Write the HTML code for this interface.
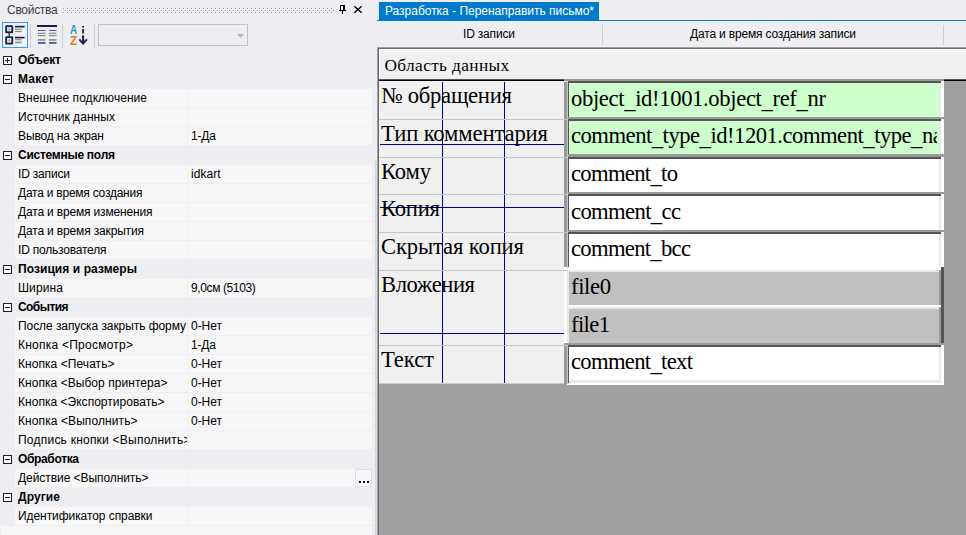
<!DOCTYPE html>
<html lang="ru">
<head>
<meta charset="utf-8">
<title>Свойства</title>
<style>
html,body{margin:0;padding:0}
body{width:966px;height:535px;position:relative;overflow:hidden;background:#EEEEF2;font-family:"Liberation Sans",sans-serif}
#root{position:absolute;left:0;top:0;width:966px;height:535px;overflow:hidden}
#root div,#root svg{position:absolute}
.t{white-space:nowrap}
.u{position:relative;top:2px}
</style>
</head>
<body>
<div id="root">
<div id="properties-panel">
<!-- left panel chrome: grip -->
<svg style="left:63px;top:8px" width="272" height="5" viewBox="0 0 272 5">
<defs><pattern id="gp" x="0" y="0" width="4" height="4" patternUnits="userSpaceOnUse"><rect x="0" y="0" width="1" height="1" fill="#999"/><rect x="2" y="2" width="1" height="1" fill="#999"/></pattern></defs>
<rect x="0" y="0" width="271" height="5" fill="url(#gp)"/>
</svg>
<!-- pin -->
<svg style="left:338px;top:4px" width="9" height="11" viewBox="0 0 9 11">
<path d="M2.5 6V1.5H6V6" fill="none" stroke="#000" stroke-width="1"/><rect x="5" y="1" width="2" height="5" fill="#000"/><rect x="1" y="6" width="7" height="1" fill="#000"/><rect x="4" y="7" width="1" height="3" fill="#000"/>
</svg>
<!-- close -->
<svg style="left:353px;top:5px" width="10" height="9" viewBox="0 0 10 9">
<path d="M1.3 1.3L8.7 7.7M8.7 1.3L1.3 7.7" fill="none" stroke="#000" stroke-width="1.4"/>
</svg>
<!-- toolbar -->
<div style="left:2px;top:22px;width:24px;height:24px;border:1px solid #3399FF;background:#F3F3F5"></div>
<svg style="left:2px;top:22px" width="92" height="26" viewBox="2 22 92 26">
<!-- icon 1 -->
<rect x="5.2" y="25.2" width="8" height="8" rx="1.3" fill="#1B1F45"/>
<rect x="7.1" y="27.1" width="4.2" height="4.2" fill="#fff"/>
<rect x="5.2" y="36.2" width="8" height="8.3" rx="1.3" fill="#1B1F45"/>
<rect x="7.1" y="38.1" width="4.2" height="4.5" fill="#fff"/>
<rect x="8.6" y="33" width="1.2" height="3.5" fill="#1B1F45"/>
<path d="M7.6 29.2H10.8M9.2 27.6V30.8" stroke="#3A9FB0" stroke-width="0.8" fill="none"/><path d="M7.6 40.3H10.8M9.2 38.7V41.9" stroke="#55AE78" stroke-width="0.8" fill="none"/>
<rect x="15" y="25.8" width="9.6" height="1.7" fill="#1B1F45"/>
<rect x="15" y="28.8" width="6.6" height="1.1" fill="#76888A"/>
<rect x="15" y="31" width="6.6" height="1.1" fill="#76888A"/>
<rect x="15" y="36.8" width="9.6" height="1.6" fill="#1B1F45"/>
<rect x="15" y="39" width="6.6" height="1.4" fill="#A0A0A0"/>
<rect x="15" y="41.7" width="6.6" height="1.5" fill="#7C8C8C"/>
<!-- icon 2 -->
<rect x="37" y="25" width="20" height="2" fill="#1B1F45"/>
<g>
<rect x="38" y="30" width="7.5" height="1" fill="#4A57A8"/><rect x="49" y="30" width="7.5" height="1" fill="#4A57A8"/>
<rect x="38" y="32.7" width="7.5" height="1.2" fill="#84908F"/><rect x="49" y="32.7" width="7.5" height="1.2" fill="#84908F"/>
<rect x="38" y="35" width="7.5" height="1.2" fill="#7A8A88"/><rect x="49" y="35" width="7.5" height="1.2" fill="#7A8A88"/>
<rect x="38" y="39" width="7.5" height="1.8" fill="#909090"/><rect x="49" y="39" width="7.5" height="1.8" fill="#909090"/>
<rect x="38" y="42" width="7.5" height="1.8" fill="#4A57A8"/><rect x="49" y="42" width="7.5" height="1.8" fill="#4A57A8"/>
</g>
<!-- icon 3 -->
<text x="70.1" y="33.7" textLength="7.2" lengthAdjust="spacingAndGlyphs" font-family="Liberation Sans, sans-serif" font-weight="700" font-size="12" fill="#1C9DBF">A</text>
<text x="70.1" y="44.7" textLength="7.2" lengthAdjust="spacingAndGlyphs" font-family="Liberation Sans, sans-serif" font-weight="700" font-size="12.6" fill="#D5801A">Z</text>
<rect x="82.2" y="26" width="1.8" height="1.6" fill="#1B1F45"/>
<rect x="82.2" y="29" width="1.8" height="4.5" fill="#1B1F45"/>
<rect x="82.1" y="35.3" width="2" height="8.6" fill="#1B1F45"/>
<path d="M79.3 39.4L83.1 43.6L86.9 39.4" fill="none" stroke="#1B1F45" stroke-width="1.9"/>
</svg>
<div style="left:30px;top:24px;width:1px;height:24px;background:#CCCEDB"></div>
<div style="left:62px;top:24px;width:1px;height:24px;background:#CCCEDB"></div>
<div style="left:94px;top:24px;width:1px;height:24px;background:#CCCEDB"></div>
<div style="left:98px;top:24px;width:148px;height:20px;border:1px solid #C4C4C6;background:#EEEEF2"></div>
<svg style="left:237px;top:34px" width="7" height="4" viewBox="0 0 7 4"><path d="M0 0H7L3.5 4Z" fill="#B4B4B6"/></svg>
<!-- bottom band of grid -->
<div style="left:1px;top:526px;width:371px;height:9px;background:#F6F6F6"></div>
<svg style="left:3px;top:56px" width="9" height="9" viewBox="0 0 9 9"><rect x="0.5" y="0.5" width="8" height="8" fill="#fff" stroke="#1e1e1e"/><rect x="2" y="4" width="5" height="1" fill="#1e1e1e"/><rect x="4" y="2" width="1" height="5" fill="#1e1e1e"/></svg>
<svg style="left:3px;top:75px" width="9" height="9" viewBox="0 0 9 9"><rect x="0.5" y="0.5" width="8" height="8" fill="#fff" stroke="#1e1e1e"/><rect x="2" y="4" width="5" height="1" fill="#1e1e1e"/></svg>
<div style="left:15px;top:89px;width:172px;height:18px;background:#F6F6F6;"></div>
<div style="left:188px;top:89px;width:184px;height:18px;background:#F6F6F6;"></div>
<div style="left:15px;top:108px;width:172px;height:18px;background:#F6F6F6;"></div>
<div style="left:188px;top:108px;width:184px;height:18px;background:#F6F6F6;"></div>
<div style="left:15px;top:127px;width:172px;height:18px;background:#F6F6F6;"></div>
<div style="left:188px;top:127px;width:184px;height:18px;background:#F6F6F6;"></div>
<svg style="left:3px;top:151px" width="9" height="9" viewBox="0 0 9 9"><rect x="0.5" y="0.5" width="8" height="8" fill="#fff" stroke="#1e1e1e"/><rect x="2" y="4" width="5" height="1" fill="#1e1e1e"/></svg>
<div style="left:15px;top:165px;width:172px;height:18px;background:#F6F6F6;"></div>
<div style="left:188px;top:165px;width:184px;height:18px;background:#F6F6F6;"></div>
<div style="left:15px;top:184px;width:172px;height:18px;background:#F6F6F6;"></div>
<div style="left:188px;top:184px;width:184px;height:18px;background:#F6F6F6;"></div>
<div style="left:15px;top:203px;width:172px;height:18px;background:#F6F6F6;"></div>
<div style="left:188px;top:203px;width:184px;height:18px;background:#F6F6F6;"></div>
<div style="left:15px;top:222px;width:172px;height:18px;background:#F6F6F6;"></div>
<div style="left:188px;top:222px;width:184px;height:18px;background:#F6F6F6;"></div>
<div style="left:15px;top:241px;width:172px;height:18px;background:#F6F6F6;"></div>
<div style="left:188px;top:241px;width:184px;height:18px;background:#F6F6F6;"></div>
<svg style="left:3px;top:265px" width="9" height="9" viewBox="0 0 9 9"><rect x="0.5" y="0.5" width="8" height="8" fill="#fff" stroke="#1e1e1e"/><rect x="2" y="4" width="5" height="1" fill="#1e1e1e"/></svg>
<div style="left:15px;top:279px;width:172px;height:18px;background:#F6F6F6;"></div>
<div style="left:188px;top:279px;width:184px;height:18px;background:#F6F6F6;"></div>
<svg style="left:3px;top:303px" width="9" height="9" viewBox="0 0 9 9"><rect x="0.5" y="0.5" width="8" height="8" fill="#fff" stroke="#1e1e1e"/><rect x="2" y="4" width="5" height="1" fill="#1e1e1e"/></svg>
<div style="left:15px;top:317px;width:172px;height:18px;background:#F6F6F6;"></div>
<div style="left:188px;top:317px;width:184px;height:18px;background:#F6F6F6;"></div>
<div style="left:15px;top:336px;width:172px;height:18px;background:#F6F6F6;"></div>
<div style="left:188px;top:336px;width:184px;height:18px;background:#F6F6F6;"></div>
<div style="left:15px;top:355px;width:172px;height:18px;background:#F6F6F6;"></div>
<div style="left:188px;top:355px;width:184px;height:18px;background:#F6F6F6;"></div>
<div style="left:15px;top:374px;width:172px;height:18px;background:#F6F6F6;"></div>
<div style="left:188px;top:374px;width:184px;height:18px;background:#F6F6F6;"></div>
<div style="left:15px;top:393px;width:172px;height:18px;background:#F6F6F6;"></div>
<div style="left:188px;top:393px;width:184px;height:18px;background:#F6F6F6;"></div>
<div style="left:15px;top:412px;width:172px;height:18px;background:#F6F6F6;"></div>
<div style="left:188px;top:412px;width:184px;height:18px;background:#F6F6F6;"></div>
<div style="left:15px;top:431px;width:172px;height:18px;background:#F6F6F6;"></div>
<div style="left:188px;top:431px;width:184px;height:18px;background:#F6F6F6;"></div>
<svg style="left:3px;top:455px" width="9" height="9" viewBox="0 0 9 9"><rect x="0.5" y="0.5" width="8" height="8" fill="#fff" stroke="#1e1e1e"/><rect x="2" y="4" width="5" height="1" fill="#1e1e1e"/></svg>
<div style="left:15px;top:469px;width:172px;height:18px;background:#F6F6F6;"></div>
<div style="left:188px;top:469px;width:184px;height:18px;background:#F6F6F6;"></div>
<svg style="left:3px;top:493px" width="9" height="9" viewBox="0 0 9 9"><rect x="0.5" y="0.5" width="8" height="8" fill="#fff" stroke="#1e1e1e"/><rect x="2" y="4" width="5" height="1" fill="#1e1e1e"/></svg>
<div style="left:15px;top:507px;width:172px;height:18px;background:#F6F6F6;"></div>
<div style="left:188px;top:507px;width:184px;height:18px;background:#F6F6F6;"></div>
<div style="left:355px;top:469px;width:15px;height:16px;border:1px solid #DCDCE8;background:#F6F6F6"></div>
<div style="left:359px;top:481px;width:2px;height:2px;background:#000;"></div>
<div style="left:363px;top:481px;width:2px;height:2px;background:#000;"></div>
<div style="left:367px;top:481px;width:2px;height:2px;background:#000;"></div>
<div class="t" style="left:18px;top:51.84px;font:700 12px/16px 'Liberation Sans', sans-serif;color:#000000;letter-spacing:-0.181px;">Объект</div>
<div class="t" style="left:18px;top:70.84px;font:700 12px/16px 'Liberation Sans', sans-serif;color:#000000;letter-spacing:0.195px;">Макет</div>
<div class="t" style="left:18px;top:89.84px;font:400 12px/16px 'Liberation Sans', sans-serif;color:#000000;letter-spacing:0.044px;">Внешнее подключение</div>
<div class="t" style="left:18px;top:108.84px;font:400 12px/16px 'Liberation Sans', sans-serif;color:#000000;letter-spacing:0.062px;">Источник данных</div>
<div class="t" style="left:18px;top:127.84px;font:400 12px/16px 'Liberation Sans', sans-serif;color:#000000;letter-spacing:-0.124px;">Вывод на экран</div>
<div class="t" style="left:191px;top:127.84px;font:400 12px/16px 'Liberation Sans', sans-serif;color:#000000;letter-spacing:-0.161px;">1-Да</div>
<div class="t" style="left:18px;top:146.84px;font:700 12px/16px 'Liberation Sans', sans-serif;color:#000000;letter-spacing:-0.262px;">Системные поля</div>
<div class="t" style="left:18px;top:165.84px;font:400 12px/16px 'Liberation Sans', sans-serif;color:#000000;letter-spacing:-0.178px;">ID записи</div>
<div class="t" style="left:191px;top:165.84px;font:400 12px/16px 'Liberation Sans', sans-serif;color:#000000;letter-spacing:0.031px;">idkart</div>
<div class="t" style="left:18px;top:184.84px;font:400 12px/16px 'Liberation Sans', sans-serif;color:#000000;letter-spacing:-0.234px;">Дата и время создания</div>
<div class="t" style="left:18px;top:203.84px;font:400 12px/16px 'Liberation Sans', sans-serif;color:#000000;letter-spacing:-0.167px;">Дата и время изменения</div>
<div class="t" style="left:18px;top:222.84px;font:400 12px/16px 'Liberation Sans', sans-serif;color:#000000;letter-spacing:-0.159px;">Дата и время закрытия</div>
<div class="t" style="left:18px;top:241.84px;font:400 12px/16px 'Liberation Sans', sans-serif;color:#000000;letter-spacing:-0.202px;">ID пользователя</div>
<div class="t" style="left:18px;top:260.84px;font:700 12px/16px 'Liberation Sans', sans-serif;color:#000000;letter-spacing:0.069px;">Позиция и размеры</div>
<div class="t" style="left:18px;top:279.84px;font:400 12px/16px 'Liberation Sans', sans-serif;color:#000000;letter-spacing:0.122px;">Ширина</div>
<div class="t" style="left:191px;top:279.84px;font:400 12px/16px 'Liberation Sans', sans-serif;color:#000000;letter-spacing:-0.387px;">9,0см (5103)</div>
<div class="t" style="left:18px;top:298.84px;font:700 12px/16px 'Liberation Sans', sans-serif;color:#000000;letter-spacing:-0.570px;">События</div>
<div class="t" style="left:18px;top:317.84px;font:400 12px/16px 'Liberation Sans', sans-serif;color:#000000;letter-spacing:-0.069px;width:168.5px;overflow:hidden;">После запуска закрыть форму</div>
<div class="t" style="left:191px;top:317.84px;font:400 12px/16px 'Liberation Sans', sans-serif;color:#000000;letter-spacing:-0.027px;">0-Нет</div>
<div class="t" style="left:18px;top:336.84px;font:400 12px/16px 'Liberation Sans', sans-serif;color:#000000;letter-spacing:0.241px;">Кнопка &lt;Просмотр&gt;</div>
<div class="t" style="left:191px;top:336.84px;font:400 12px/16px 'Liberation Sans', sans-serif;color:#000000;letter-spacing:-0.161px;">1-Да</div>
<div class="t" style="left:18px;top:355.84px;font:400 12px/16px 'Liberation Sans', sans-serif;color:#000000;letter-spacing:0.061px;">Кнопка &lt;Печать&gt;</div>
<div class="t" style="left:191px;top:355.84px;font:400 12px/16px 'Liberation Sans', sans-serif;color:#000000;letter-spacing:-0.027px;">0-Нет</div>
<div class="t" style="left:18px;top:374.84px;font:400 12px/16px 'Liberation Sans', sans-serif;color:#000000;letter-spacing:0.050px;">Кнопка &lt;Выбор принтера&gt;</div>
<div class="t" style="left:191px;top:374.84px;font:400 12px/16px 'Liberation Sans', sans-serif;color:#000000;letter-spacing:-0.027px;">0-Нет</div>
<div class="t" style="left:18px;top:393.84px;font:400 12px/16px 'Liberation Sans', sans-serif;color:#000000;letter-spacing:0.028px;">Кнопка &lt;Экспортировать&gt;</div>
<div class="t" style="left:191px;top:393.84px;font:400 12px/16px 'Liberation Sans', sans-serif;color:#000000;letter-spacing:-0.027px;">0-Нет</div>
<div class="t" style="left:18px;top:412.84px;font:400 12px/16px 'Liberation Sans', sans-serif;color:#000000;letter-spacing:0.091px;">Кнопка &lt;Выполнить&gt;</div>
<div class="t" style="left:191px;top:412.84px;font:400 12px/16px 'Liberation Sans', sans-serif;color:#000000;letter-spacing:-0.027px;">0-Нет</div>
<div class="t" style="left:18px;top:431.84px;font:400 12px/16px 'Liberation Sans', sans-serif;color:#000000;letter-spacing:0.228px;width:168.5px;overflow:hidden;">Подпись кнопки &lt;Выполнить&gt;</div>
<div class="t" style="left:18px;top:450.84px;font:700 12px/16px 'Liberation Sans', sans-serif;color:#000000;letter-spacing:-0.344px;">Обработка</div>
<div class="t" style="left:18px;top:469.84px;font:400 12px/16px 'Liberation Sans', sans-serif;color:#000000;letter-spacing:-0.064px;">Действие &lt;Выполнить&gt;</div>
<div class="t" style="left:18px;top:488.84px;font:700 12px/16px 'Liberation Sans', sans-serif;color:#000000;letter-spacing:0.109px;">Другие</div>
<div class="t" style="left:18px;top:507.84px;font:400 12px/16px 'Liberation Sans', sans-serif;color:#000000;letter-spacing:-0.067px;">Идентификатор справки</div>
<div class="t" style="left:7px;top:1.84px;font:400 12px/16px 'Liberation Sans', sans-serif;color:#3C3C3C;letter-spacing:-0.286px;">Свойства</div>
</div>
<div id="designer">
<!-- right panel -->
<div style="left:377px;top:20px;width:589px;height:1px;background:#007ACC"></div>
<div style="left:379px;top:2px;width:220px;height:18px;background:#007ACC"></div>
<div style="left:602px;top:25px;width:1px;height:20px;background:#CCCEDB"></div>
<div style="left:943px;top:25px;width:1px;height:20px;background:#CCCEDB"></div>
<!-- splitter -->
<div style="left:375px;top:160px;width:2px;height:375px;background:#E0E0EA"></div>
<div style="left:375px;top:160px;width:1px;height:375px;background-image:linear-gradient(#CDCDDD 50%,transparent 50%);background-size:1px 2px"></div>
<!-- design surface -->
<div style="left:377px;top:47px;width:589px;height:488px;background:#A0A0A0"></div>
<div style="left:377px;top:47px;width:589px;height:1px;background:#A0A0A0"></div>
<div style="left:377px;top:47px;width:1px;height:488px;background:#A0A0A0"></div>
<div style="left:378px;top:48px;width:588px;height:1px;background:#696969"></div>
<div style="left:378px;top:48px;width:1px;height:487px;background:#696969"></div>
<div style="left:379px;top:49px;width:587px;height:31px;background:#F0F0F0"></div>
<div style="left:379px;top:49px;width:587px;height:1px;background:#FFFFFF"></div>
<div style="left:379px;top:49px;width:1px;height:31px;background:#FFFFFF"></div>
<div style="left:379px;top:79px;width:587px;height:1px;background:#555"></div>
<div style="left:379px;top:80px;width:587px;height:1px;background:#000"></div>
<div style="left:379px;top:81px;width:185px;height:303px;background:#F0F0F0"></div>
<div style="left:564px;top:79px;width:380px;height:38px;background:#9A9A9A;"></div>
<div style="left:941px;top:81px;width:3px;height:36px;background:#FFFFFF;"></div>
<div style="left:568px;top:81px;width:373px;height:36px;background:#555555;"></div>
<div style="left:939px;top:83px;width:2px;height:34px;background:#E8E8E8;"></div>
<div style="left:569px;top:83px;width:370px;height:34px;background:#CCFFCC;"></div>
<div style="left:564px;top:117px;width:380px;height:37px;background:#9A9A9A;"></div>
<div style="left:941px;top:119px;width:3px;height:35px;background:#FFFFFF;"></div>
<div style="left:568px;top:119px;width:373px;height:35px;background:#555555;"></div>
<div style="left:939px;top:121px;width:2px;height:33px;background:#E8E8E8;"></div>
<div style="left:569px;top:121px;width:370px;height:33px;background:#CCFFCC;"></div>
<div style="left:564px;top:154px;width:380px;height:38px;background:#9A9A9A;"></div>
<div style="left:941px;top:157px;width:3px;height:35px;background:#FFFFFF;"></div>
<div style="left:568px;top:157px;width:373px;height:35px;background:#555555;"></div>
<div style="left:939px;top:159px;width:2px;height:33px;background:#E8E8E8;"></div>
<div style="left:569px;top:159px;width:370px;height:33px;background:#FFFFFF;"></div>
<div style="left:564px;top:192px;width:380px;height:38px;background:#9A9A9A;"></div>
<div style="left:941px;top:194px;width:3px;height:36px;background:#FFFFFF;"></div>
<div style="left:568px;top:194px;width:373px;height:36px;background:#555555;"></div>
<div style="left:939px;top:196px;width:2px;height:34px;background:#E8E8E8;"></div>
<div style="left:569px;top:196px;width:370px;height:34px;background:#FFFFFF;"></div>
<div style="left:564px;top:230px;width:380px;height:37px;background:#9A9A9A;"></div>
<div style="left:941px;top:232px;width:3px;height:35px;background:#FFFFFF;"></div>
<div style="left:568px;top:232px;width:373px;height:35px;background:#555555;"></div>
<div style="left:939px;top:234px;width:2px;height:33px;background:#E8E8E8;"></div>
<div style="left:569px;top:234px;width:370px;height:33px;background:#FFFFFF;"></div>
<div style="left:564px;top:267px;width:380px;height:38px;background:#FFFFFF;"></div>
<div style="left:567px;top:270px;width:377px;height:35px;background:#E8E8E8;"></div>
<div style="left:939px;top:270px;width:2px;height:35px;background:#9A9A9A;"></div>
<div style="left:941px;top:267px;width:3px;height:38px;background:#555555;"></div>
<div style="left:569px;top:272px;width:370px;height:33px;background:#C0C0C0;"></div>
<div style="left:564px;top:305px;width:380px;height:38px;background:#FFFFFF;"></div>
<div style="left:567px;top:307px;width:377px;height:36px;background:#E8E8E8;"></div>
<div style="left:939px;top:307px;width:2px;height:36px;background:#9A9A9A;"></div>
<div style="left:941px;top:305px;width:3px;height:38px;background:#555555;"></div>
<div style="left:569px;top:309px;width:370px;height:34px;background:#C0C0C0;"></div>
<div style="left:564px;top:343px;width:380px;height:42px;background:#9A9A9A;"></div>
<div style="left:941px;top:345px;width:3px;height:40px;background:#FFFFFF;"></div>
<div style="left:568px;top:345px;width:373px;height:40px;background:#555555;"></div>
<div style="left:939px;top:347px;width:2px;height:38px;background:#E8E8E8;"></div>
<div style="left:569px;top:347px;width:370px;height:33px;background:#FFFFFF;"></div>
<div style="left:569px;top:380px;width:372px;height:3px;background:#E8E8E8;"></div>
<div style="left:567px;top:383px;width:377px;height:2px;background:#FFFFFF;"></div>
<div style="left:564px;top:384px;width:3px;height:1px;background:#A0A0A0;"></div>
<div style="left:379px;top:119px;width:189px;height:1px;background:#C6C6C6;"></div>
<div style="left:379px;top:157px;width:189px;height:1px;background:#C6C6C6;"></div>
<div style="left:379px;top:194px;width:189px;height:1px;background:#C6C6C6;"></div>
<div style="left:379px;top:232px;width:189px;height:1px;background:#C6C6C6;"></div>
<div style="left:379px;top:270px;width:189px;height:1px;background:#C6C6C6;"></div>
<div style="left:379px;top:345px;width:189px;height:1px;background:#C6C6C6;"></div>
<div style="left:379px;top:383px;width:185px;height:1px;background:#CFCFCF;"></div>
<div style="left:567px;top:81px;width:1px;height:186px;background:#C6C6C6;"></div>
<div style="left:567px;top:267px;width:1px;height:76px;background:#E4E4E4;"></div>
<div style="left:567px;top:345px;width:1px;height:39px;background:#C6C6C6;"></div>
<div style="left:564px;top:81px;width:4px;height:1px;background:#D8D8D8;"></div>
<div style="left:442px;top:82px;width:1px;height:37px;background:#00008B;"></div>
<div style="left:442px;top:120px;width:1px;height:37px;background:#00008B;"></div>
<div style="left:442px;top:158px;width:1px;height:36px;background:#00008B;"></div>
<div style="left:442px;top:195px;width:1px;height:37px;background:#00008B;"></div>
<div style="left:442px;top:233px;width:1px;height:37px;background:#00008B;"></div>
<div style="left:442px;top:271px;width:1px;height:74px;background:#00008B;"></div>
<div style="left:442px;top:346px;width:1px;height:37px;background:#00008B;"></div>
<div style="left:504px;top:82px;width:1px;height:37px;background:#00008B;"></div>
<div style="left:504px;top:120px;width:1px;height:37px;background:#00008B;"></div>
<div style="left:504px;top:158px;width:1px;height:36px;background:#00008B;"></div>
<div style="left:504px;top:195px;width:1px;height:37px;background:#00008B;"></div>
<div style="left:504px;top:233px;width:1px;height:37px;background:#00008B;"></div>
<div style="left:504px;top:271px;width:1px;height:74px;background:#00008B;"></div>
<div style="left:504px;top:346px;width:1px;height:37px;background:#00008B;"></div>
<div style="left:380px;top:144px;width:184px;height:1px;background:#00008B;"></div>
<div style="left:380px;top:207px;width:184px;height:1px;background:#00008B;"></div>
<div style="left:380px;top:333px;width:184px;height:1px;background:#00008B;"></div>
<div class="t" style="left:385px;top:2.84px;font:400 12px/16px 'Liberation Sans', sans-serif;color:#FFFFFF;letter-spacing:-0.019px;">Разработка - Перенаправить письмо*</div>
<div class="t" style="left:463px;top:25.84px;font:400 12px/16px 'Liberation Sans', sans-serif;color:#000000;letter-spacing:-0.178px;">ID записи</div>
<div class="t" style="left:690px;top:25.84px;font:400 12px/16px 'Liberation Sans', sans-serif;color:#000000;letter-spacing:-0.170px;">Дата и время создания записи</div>
<div class="t" style="left:384.5px;top:53.95px;font:400 17.33px/23px 'Liberation Serif', serif;color:#000;letter-spacing:0.353px;">Область данных</div>
<div class="t" style="left:381px;top:80.85px;font:400 22.67px/29px 'Liberation Serif', serif;color:#000;letter-spacing:-0.270px;">№ обращения</div>
<div class="t" style="left:381px;top:118.85px;font:400 22.67px/29px 'Liberation Serif', serif;color:#000;letter-spacing:-0.136px;">Тип комментария</div>
<div class="t" style="left:381px;top:156.85px;font:400 22.67px/29px 'Liberation Serif', serif;color:#000;letter-spacing:-0.182px;">Кому</div>
<div class="t" style="left:381px;top:193.85px;font:400 22.67px/29px 'Liberation Serif', serif;color:#000;letter-spacing:-0.246px;">Копия</div>
<div class="t" style="left:381px;top:231.85px;font:400 22.67px/29px 'Liberation Serif', serif;color:#000;letter-spacing:-0.154px;">Скрытая копия</div>
<div class="t" style="left:381px;top:269.85px;font:400 22.67px/29px 'Liberation Serif', serif;color:#000;letter-spacing:-0.467px;">Вложения</div>
<div class="t" style="left:381px;top:344.85px;font:400 22.67px/29px 'Liberation Serif', serif;color:#000;letter-spacing:-0.109px;">Текст</div>
<div class="t" style="left:571px;top:83.85px;font:400 22.67px/29px 'Liberation Serif', serif;color:#000;letter-spacing:-0.366px;">object<span class="u">_</span>id!1001.object<span class="u">_</span>ref<span class="u">_</span>nr</div>
<div class="t" style="left:571px;top:120.85px;font:400 22.67px/29px 'Liberation Serif', serif;color:#000;letter-spacing:-0.506px;width:366px;overflow:hidden;">comment<span class="u">_</span>type<span class="u">_</span>id!1201.comment<span class="u">_</span>type<span class="u">_</span>na</div>
<div class="t" style="left:571px;top:158.85px;font:400 22.67px/29px 'Liberation Serif', serif;color:#000;letter-spacing:-0.696px;">comment<span class="u">_</span>to</div>
<div class="t" style="left:571px;top:196.85px;font:400 22.67px/29px 'Liberation Serif', serif;color:#000;letter-spacing:-0.639px;">comment<span class="u">_</span>cc</div>
<div class="t" style="left:571px;top:233.85px;font:400 22.67px/29px 'Liberation Serif', serif;color:#000;letter-spacing:-0.708px;">comment<span class="u">_</span>bcc</div>
<div class="t" style="left:571px;top:271.85px;font:400 22.67px/29px 'Liberation Serif', serif;color:#000;letter-spacing:-0.383px;">file0</div>
<div class="t" style="left:571px;top:309.85px;font:400 22.67px/29px 'Liberation Serif', serif;color:#000;letter-spacing:-0.633px;">file1</div>
<div class="t" style="left:571px;top:346.85px;font:400 22.67px/29px 'Liberation Serif', serif;color:#000;letter-spacing:-0.693px;">comment<span class="u">_</span>text</div>
</div>
</div>
</body>
</html>
